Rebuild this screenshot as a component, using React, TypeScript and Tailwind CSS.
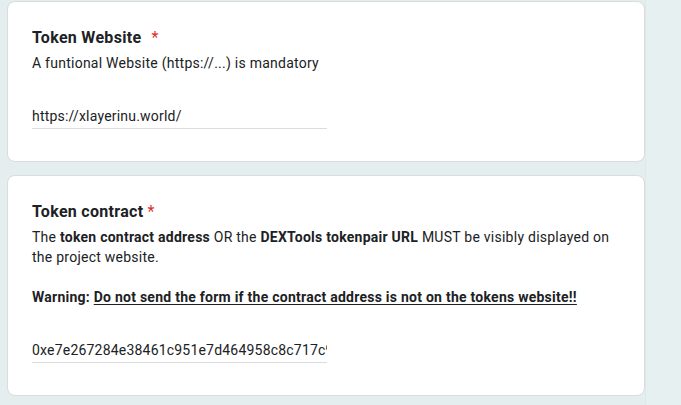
import React from 'react';

const font = { fontFamily: 'Roboto, "Liberation Sans", Arial, sans-serif' };

function Card({ children }: { children: React.ReactNode }) {
  return (
    <div className="w-[638px] rounded-lg border border-[#dadce0] bg-white px-6 pt-6 pb-[32px]">
      {children}
    </div>
  );
}

function Title({ text, gap }: { text: string; gap: string }) {
  return (
    <div className="flex h-6 items-center text-[16px] leading-6 font-bold tracking-[0.3px] text-[#202124]">
      <span>{text}</span>
      <span className={`${gap} text-[#d93025] font-normal`}>*</span>
    </div>
  );
}

function Answer({ value }: { value: string }) {
  return (
    <div className="mt-[33px] w-[295px] overflow-hidden border-b border-[#dadce0] pb-[2px]">
      <div className="whitespace-nowrap text-[14px] leading-5 tracking-[0.2px] text-[#202124]">{value}</div>
    </div>
  );
}

export default function App() {
  return (
    <div className="flex h-[405px] w-[681px] overflow-hidden bg-[#e5eeee]" style={font}>
      <div className="flex flex-col gap-[13px] pl-[7px] pt-[1px]">
        <Card>
          <Title text="Token Website" gap="ml-[10px]" />
          <p className="mt-[3px] text-[14px] leading-5 tracking-[0.25px] text-[#202124]">
            A funtional Website (https://...) is mandatory
          </p>
          <Answer value="https://xlayerinu.world/" />
        </Card>
        <Card>
          <Title text="Token contract" gap="ml-[4px]" />
          <p className="mt-[3px] text-[14px] leading-5 tracking-[0.25px] text-[#202124]">
            The <b>token contract address</b> OR the <b>DEXTools tokenpair URL</b> MUST be visibly displayed on the project website.
            <br />
            <br />
            <b>Warning:</b>{' '}
            <b className="underline underline-offset-2">
              Do not send the form if the contract address is not on the tokens website!!
            </b>
          </p>
          <Answer value="0xe7e267284e38461c951e7d464958c8c717c9a3d2" />
        </Card>
      </div>
      <div className="flex-1 border-l border-[#dfe8e8] bg-[#e7f0f0]" />
    </div>
  );
}
